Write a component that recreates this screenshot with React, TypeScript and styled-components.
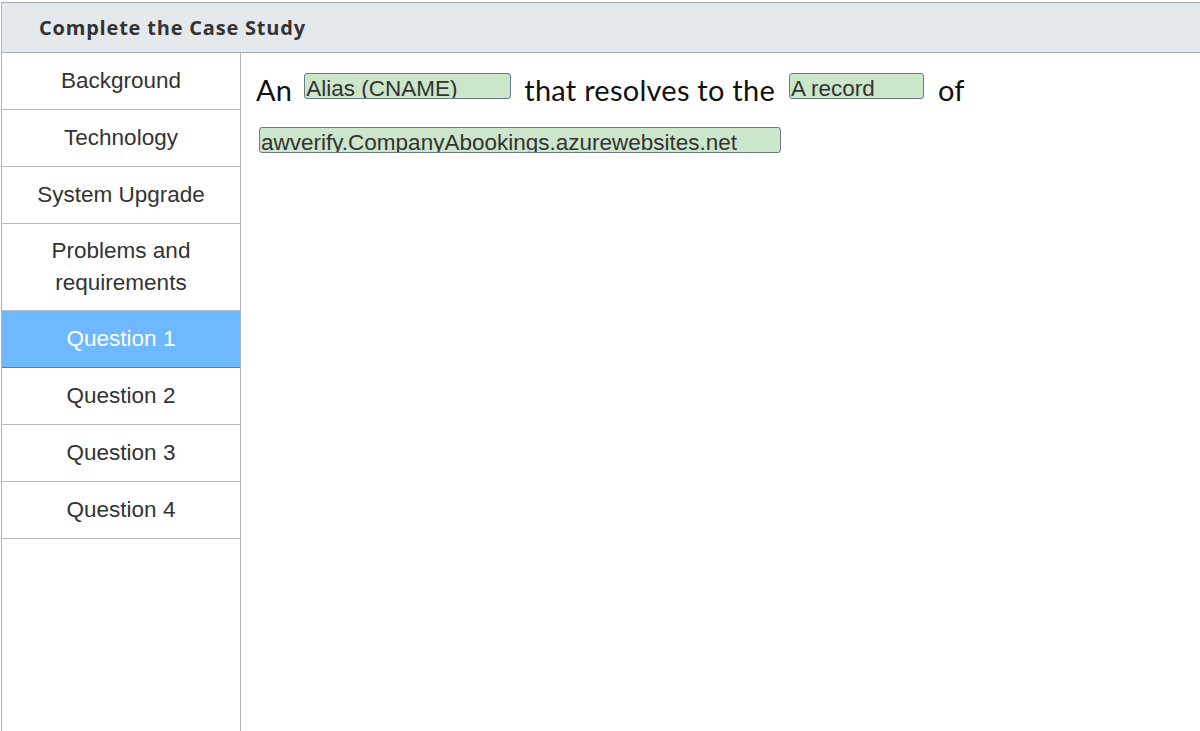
import React from "react";
import styled, { createGlobalStyle } from "styled-components";

const Global = createGlobalStyle`
  html, body { margin: 0; padding: 0; background: #fff; }
  body { font-family: "Liberation Sans", Arial, sans-serif; }
`;

const Frame = styled.div`
  margin: 2px 0 0 1px;
  height: 729px;
  display: flex;
  flex-direction: column;
  border-top: 1px solid #a6a8ab;
  border-left: 1px solid #b3b5b8;
  box-sizing: border-box;
`;

const Header = styled.div`
  height: 49px;
  flex: none;
  background: #e4e9ed;
  border-bottom: 1px solid #a6a8ab;
  display: flex;
  align-items: center;
  padding-left: 37px;
  font-family: "Open Sans", sans-serif;
  font-weight: 700;
  font-size: 20px;
  letter-spacing: 0.8px;
  color: #333;
`;

const Body = styled.div`
  flex: 1;
  display: flex;
  min-height: 0;
`;

const Sidebar = styled.nav`
  width: 238px;
  flex: none;
  border-right: 1px solid #b3b5b8;
  display: flex;
  flex-direction: column;
`;

const NavItem = styled.div<{ $active?: boolean; $tall?: boolean }>`
  height: ${(p) => (p.$tall ? 87 : 57)}px;
  border-bottom: 1px solid ${(p) => (p.$active ? "#4a7fb5" : "#b9bbbe")};
  background: ${(p) => (p.$active ? "#6db8ff" : "#fff")};
  color: ${(p) => (p.$active ? "#fff" : "#333")};
  display: flex;
  align-items: center;
  justify-content: center;
  text-align: center;
  font-size: 22.5px;
  line-height: 32px;
  padding-bottom: 1px;
  box-sizing: border-box;
`;

const Content = styled.main`
  flex: 1;
  padding: 19px 0 0 15px;
`;

const Line = styled.div`
  display: flex;
  align-items: flex-start;
  height: 54px;
`;

const Word = styled.span`
  font-family: "Lato", "Open Sans", sans-serif;
  font-size: 29px;
  letter-spacing: 0.25px;
  line-height: 36px;
  color: #111;
`;

const Slot = styled.span<{ $w: number; $ml?: number; $mr?: number }>`
  width: ${(p) => p.$w}px;
  height: 26px;
  margin: 1px ${(p) => p.$mr ?? 0}px 0 ${(p) => p.$ml ?? 0}px;
  box-sizing: border-box;
  background: #cce6cb;
  border: 1px solid #6c7a84;
  border-radius: 3px;
  font-family: "Liberation Sans", Arial, sans-serif;
  font-size: 22.5px;
  line-height: 24px;
  padding: 3px 0 0 1px;
  color: #333;
  overflow: hidden;
  white-space: nowrap;
  display: block;
`;

const items = [
  "Background",
  "Technology",
  "System Upgrade",
  "Problems and requirements",
  "Question 1",
  "Question 2",
  "Question 3",
  "Question 4",
];

export default function App() {
  return (
    <>
      <Global />
      <Frame>
        <Header>Complete the Case Study</Header>
        <Body>
          <Sidebar>
            {items.map((t, i) => (
              <NavItem key={t} $active={i === 4} $tall={i === 3}>
                {i === 3 ? (
                  <span>
                    Problems and
                    <br />
                    requirements
                  </span>
                ) : (
                  t
                )}
              </NavItem>
            ))}
          </Sidebar>
          <Content>
            <Line>
              <Word>An</Word>
              <Slot $w={207} $ml={12} $mr={13}>Alias (CNAME)</Slot>
              <Word>that resolves to the</Word>
              <Slot $w={135} $ml={14} $mr={14}>A record</Slot>
              <Word>of</Word>
            </Line>
            <Line>
              <Slot $w={522} $ml={3}>awverify.CompanyAbookings.azurewebsites.net</Slot>
            </Line>
          </Content>
        </Body>
      </Frame>
    </>
  );
}
